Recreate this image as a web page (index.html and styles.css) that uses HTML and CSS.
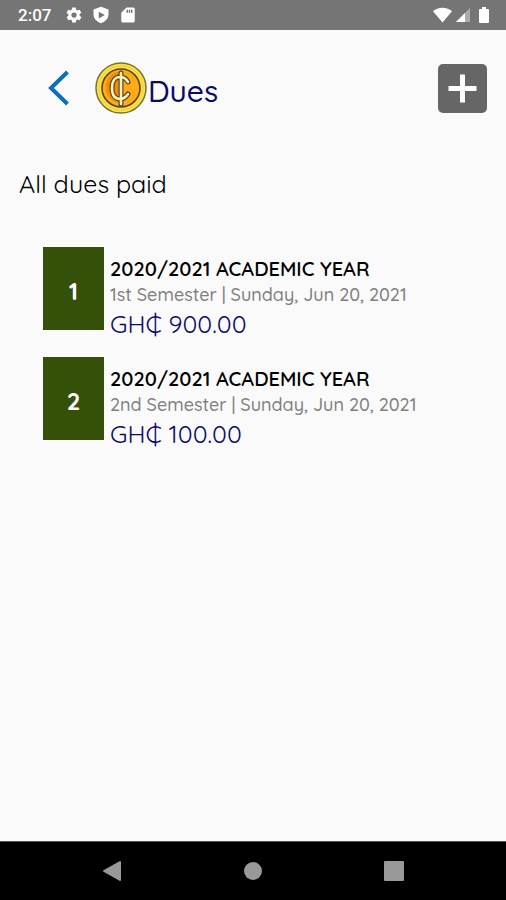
FILE: index.html
```html
<!DOCTYPE html>
<html lang="en">
<head>
<meta charset="utf-8">
<meta name="viewport" content="width=device-width, initial-scale=1">
<title>Dues</title>
<link rel="stylesheet" href="styles.css">
</head>
<body>
<div class="status">
  <span class="clock">2:07</span>
  <div class="status-icons">
    <svg width="18" height="18" viewBox="0 0 24 24"><path fill-rule="evenodd" d="M19.4 13a7.500 7.500 0 0 0 0-2l2.100-1.600a.5.5 0 0 0 .1-.7l-2-3.400a.5.5 0 0 0-.6-.2l-2.500 1a7.300 7.300 0 0 0-1.700-1l-.4-2.600a.5.5 0 0 0-.5-.5h-4a.5.5 0 0 0-.5.4L9 5.100a7.300 7.300 0 0 0-1.700 1l-2.500-1a.5.5 0 0 0-.6.2l-2 3.400a.5.5 0 0 0 .1.700L4.500 11a7.500 7.500 0 0 0 0 2l-2.100 1.600a.5.5 0 0 0-.1.700l2 3.400c.1.200.4.3.6.2l2.500-1a7.300 7.300 0 0 0 1.700 1l.4 2.600c0 .3.200.5.500.5h4c.3 0 .5-.2.5-.5l.4-2.600a7.300 7.300 0 0 0 1.700-1l2.500 1c.2.100.5 0 .6-.2l2-3.400a.5.5 0 0 0-.1-.7zM12 15.500a3.500 3.500 0 1 1 0-7 3.500 3.500 0 0 1 0 7z"/></svg>
    <svg width="18" height="18" viewBox="0 0 24 24"><path fill-rule="evenodd" d="M12 1 2 4.500V11c0 5.500 4 10 10 12 6-2 10-6.500 10-12V4.500zM9 7.500l8 4.500-8 4.500z"/></svg>
    <svg width="18" height="18" viewBox="0 0 24 24"><path fill-rule="evenodd" d="M19 2h-9L3 9v11a2 2 0 0 0 2 2h14a2 2 0 0 0 2-2V4a2 2 0 0 0-2-2zM10 5h2v4h-2zm3 0h2v4h-2zm3 0h2v4h-2z"/></svg>
  </div>
  <div class="signal">
    <svg width="19" height="18" viewBox="0 0 20 18"><path d="M10 17 0 5c5-5 15-5 20 0z"/></svg>
    <svg width="16" height="18" viewBox="0 0 16 18"><path d="M15 2v14H1z" opacity=".4"/><path d="M10 7v9H1z"/></svg>
    <svg class="battery" width="12" height="18" viewBox="0 0 12 18"><path d="M4 1h4v2h2q1 0 1 1v12q0 1-1 1H2q-1 0-1-1V4q0-1 1-1h2z"/></svg>
  </div>
</div>
<header class="header">
  <button class="back" type="button" aria-label="Back"><svg width="22" height="36" viewBox="0 0 22 36"><path d="M19.500 2 3 18l16.500 16" fill="none" stroke="#0b70b5" stroke-width="4"/></svg></button>
  <svg class="coin" width="52" height="52" viewBox="0 0 52 52" aria-hidden="true">
    <circle cx="26" cy="26" r="25" fill="#fbe24c" stroke="#79742c" stroke-width="1.500"/>
    <circle cx="26" cy="26" r="22" fill="none" stroke="#efcb30" stroke-width="1"/>
    <circle cx="26" cy="26" r="19" fill="#ffab18" stroke="#55451f" stroke-width="1.600"/>
    <path d="M14 15q-8 13 3 23l10 5V10q-8-1-13 5z" fill="#f68b05"/>
    <g fill="none" stroke-linecap="round">
      <path d="M33 20c-2-4-5-5-8-5-5 0-8 4-8 11s3 11 8 11c4 0 6-2 8-5M26 11v31" stroke="#4c4934" stroke-width="5"/>
      <path d="M33 20c-2-4-5-5-8-5-5 0-8 4-8 11s3 11 8 11c4 0 6-2 8-5M26 11v31" stroke="#fff0a8" stroke-width="2.600"/>
    </g>
  </svg>
  <h1 class="title">Dues</h1>
  <button class="add" type="button" aria-label="Add dues"><svg width="49" height="49" viewBox="0 0 49 49"><rect width="49" height="49" rx="5" fill="#666"/><path d="M24.500 10.500v28M10.500 24.500h28" stroke="#fff" stroke-width="5"/></svg></button>
</header>
<main class="main">
  <h2 class="subtitle">All dues paid</h2>
  <ul class="list">
    <li class="item">
      <span class="number">1</span>
      <div class="details">
        <h3 class="year">2020/2021 ACADEMIC YEAR</h3>
        <p class="date">1st Semester | Sunday, Jun 20, 2021</p>
        <p class="amount">GH₵ 900.00</p>
      </div>
    </li>
    <li class="item">
      <span class="number">2</span>
      <div class="details">
        <h3 class="year">2020/2021 ACADEMIC YEAR</h3>
        <p class="date">2nd Semester | Sunday, Jun 20, 2021</p>
        <p class="amount">GH₵ 100.00</p>
      </div>
    </li>
  </ul>
</main>
<nav class="nav" aria-label="System">
  <button type="button" aria-label="System back"><svg width="20" height="22" viewBox="0 0 20 22"><path d="M18 2v18L2 11z" stroke="#999" stroke-width="2" stroke-linejoin="round"/></svg></button>
  <button type="button" aria-label="Home"><svg width="20" height="22" viewBox="0 0 20 22"><circle cx="10" cy="11" r="9"/></svg></button>
  <button type="button" aria-label="Recent apps"><svg width="20" height="22" viewBox="0 0 20 22"><rect y="1" width="20" height="20" rx="1"/></svg></button>
</nav>
</body>
</html>
```

FILE: styles.css
```css
* { box-sizing: border-box; }

body {
  margin: 0;
  min-height: 100vh;
  display: flex;
  flex-direction: column;
  background: #fafafa;
  color: #111;
  font-family: Quicksand, Lato, "DejaVu Sans", sans-serif;
}

h1, h2, h3, p, ul { margin: 0; padding: 0; font-weight: 400; }

svg { display: block; }

button {
  padding: 0;
  border: 0;
  background: none;
}

.status {
  display: flex;
  align-items: center;
  height: 30px;
  padding: 0 16px 0 18px;
  background: #757575;
  color: #fff;
  fill: #fff;
}

.clock {
  font: 500 17px/30px Roboto, sans-serif;
}

.status-icons {
  display: flex;
  gap: 9px;
  margin-left: 14px;
}

.signal {
  display: flex;
  gap: 3px;
  margin-left: auto;
}

.battery { margin-left: 4px; }

.header {
  display: flex;
  align-items: center;
  height: 116px;
  padding: 0 19px 0 48px;
}

.coin { margin: 0 1px 0 25px; }

.title {
  color: #0b0b63;
  font-size: 30px;
  font-weight: 500;
  line-height: 36px;
  padding-top: 6px;
}

.add { margin-left: auto; }

.main {
  flex: 1;
  padding: 20px 19px;
}

.subtitle {
  color: #000;
  font-size: 25px;
  line-height: 36px;
}

.list {
  display: grid;
  gap: 20px;
  margin-top: 45px;
  padding-left: 24px;
  list-style: none;
}

.item {
  display: flex;
  gap: 6px;
  height: 90px;
}

.number {
  display: grid;
  place-items: center;
  width: 61px;
  height: 83px;
  padding-top: 4px;
  background: #345009;
  color: #fff;
  font-size: 24px;
  font-weight: 700;
}

.details { padding-top: 9px; }

.year {
  color: #000;
  font-size: 20px;
  font-weight: 600;
  line-height: 26px;
}

.date {
  color: #808080;
  font-size: 18px;
  font-weight: 500;
  line-height: 26px;
}

.amount {
  color: #0c0c68;
  font-size: 25px;
  line-height: 32px;
}

.nav {
  display: flex;
  align-items: center;
  justify-content: space-between;
  height: 59px;
  padding: 0 102px;
  border-top: 1px solid #555;
  background: #000;
  fill: #999;
}
```
